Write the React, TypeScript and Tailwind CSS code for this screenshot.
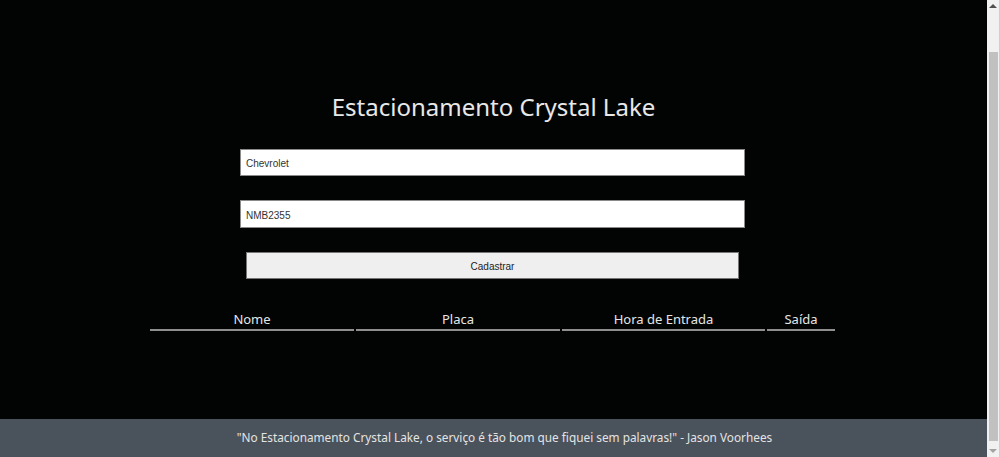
import React, { useState } from "react";

const quick = { fontFamily: '"Noto Sans", Lato, sans-serif' };

const App = () => {
  const [nome, setNome] = useState("Chevrolet");
  const [placa, setPlaca] = useState("NMB2355");

  return (
    <div className="flex h-[457px] w-[1000px] overflow-hidden bg-[#020403]">
      <div className="flex flex-1 flex-col">
        <main className="flex flex-1 flex-col items-center">
          <h1
            className="mt-[92px] text-[24px] leading-[30px] text-[#e8e8e8]"
            style={quick}
          >
            Estacionamento Crystal Lake
          </h1>

          <div
            className="mt-[27px] flex w-[505px] -translate-x-[1px] flex-col"
            style={{ fontFamily: '"Liberation Sans", Arial, sans-serif' }}
          >
            <input
              value={nome}
              onChange={(e) => setNome(e.target.value)}
              className="h-[27px] w-full border border-[#8a8a8a] bg-white px-[5px] pt-[2px] text-[10px] text-[#333] outline-none"
            />
            <input
              value={placa}
              onChange={(e) => setPlaca(e.target.value)}
              className="mt-[24px] h-[28px] w-full border border-[#8a8a8a] bg-white px-[5px] pt-[2px] text-[10px] text-[#333] outline-none"
            />
            <button className="mx-[6px] mt-[24px] h-[27px] border border-[#767676] bg-[#efefef] pt-[2px] text-[10px] text-[#222]">
              Cadastrar
            </button>
          </div>

          <table
            className="mt-[31px] -translate-x-[1px] border-separate border-spacing-x-[2px] text-[13px] text-[#e6e6e6]"
            style={quick}
          >
            <thead>
              <tr>
                <th className="w-[204px] border-b-2 border-[#8f8f8f] font-normal leading-[19px]">Nome</th>
                <th className="w-[204px] border-b-2 border-[#8f8f8f] font-normal leading-[19px]">Placa</th>
                <th className="w-[203px] border-b-2 border-[#8f8f8f] font-normal leading-[19px]">Hora de Entrada</th>
                <th className="w-[68px] border-b-2 border-[#8f8f8f] font-normal leading-[19px]">Saída</th>
              </tr>
            </thead>
            <tbody></tbody>
          </table>
        </main>

        <footer
          className="flex h-[38px] items-center justify-center bg-[#4a525b] pl-[22px] text-[11.8px] text-[#e4e4e4]"
          style={quick}
        >
          "No Estacionamento Crystal Lake, o serviço é tão bom que fiquei sem palavras!" - Jason Voorhees
        </footer>
      </div>

      <div className="flex w-[13px] flex-col items-center border-r border-[#cfcfcf] bg-[#f1f1f1]">
        <div className="mt-[4px] h-0 w-0 border-x-[4px] border-b-[4px] border-x-transparent border-b-[#505050]" />
        <div className="mt-[44px] w-[9px] flex-1 bg-[#c1c1c1]" />
        <div className="mb-[4px] mt-[8px] h-0 w-0 border-x-[4px] border-t-[4px] border-x-transparent border-t-[#a3a3a3]" />
      </div>
    </div>
  );
};

export default App;
